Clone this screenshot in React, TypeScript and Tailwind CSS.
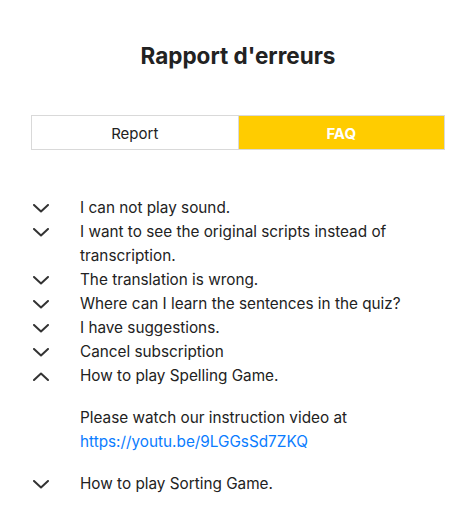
import React, { useState } from 'react';

interface FaqItem {
  question: string;
  answer?: React.ReactNode;
}

const items: FaqItem[] = [
  { question: 'I can not play sound.' },
  { question: 'I want to see the original scripts instead of transcription.' },
  { question: 'The translation is wrong.' },
  { question: 'Where can I learn the sentences in the quiz?' },
  { question: 'I have suggestions.' },
  { question: 'Cancel subscription' },
  {
    question: 'How to play Spelling Game.',
    answer: (
      <>
        Please watch our instruction video at
        <br />
        <a href="#" className="text-[#0a7cff]">
          https://youtu.be/9LGGsSd7ZKQ
        </a>
      </>
    ),
  },
  { question: 'How to play Sorting Game.' },
];

const Chevron: React.FC<{ up?: boolean }> = ({ up }) => (
  <svg width="16" height="9" viewBox="0 0 16 9" fill="none" className="shrink-0">
    <path
      d={up ? 'M1 8L8 1.5L15 8' : 'M1 1L8 7.5L15 1'}
      stroke="#333"
      strokeWidth="2"
      strokeLinecap="round"
      strokeLinejoin="round"
    />
  </svg>
);

const App: React.FC = () => {
  const [tab, setTab] = useState<'report' | 'faq'>('faq');
  const [open, setOpen] = useState<number>(6);

  return (
    <div className="min-h-screen bg-white font-['Inter',sans-serif] text-[#222]">
      <div className="ml-[31px] w-[414px]">
        <h1 className="pt-[42px] text-center text-[22.5px] font-bold leading-7 text-[#222]">
          Rapport d'erreurs
        </h1>

        <div className="mt-[45px] flex h-[35px] border border-[#d9d9d9]">
          <button
            onClick={() => setTab('report')}
            className={`flex-1 pt-[3px] text-[15px] ${
              tab === 'report' ? 'bg-[#ffcc00] font-bold text-white' : 'bg-white text-[#222]'
            }`}
          >
            Report
          </button>
          <button
            onClick={() => setTab('faq')}
            className={`flex-1 border-l border-[#d9d9d9] pt-[3px] text-[15px] ${
              tab === 'faq' ? 'bg-[#ffcc00] font-bold text-white' : 'bg-white text-[#222]'
            }`}
          >
            FAQ
          </button>
        </div>

        <ul className="mt-[46px] pl-[2px] text-[15.3px] leading-6">
          {items.map((item, i) => (
            <li key={item.question}>
              <button
                onClick={() => setOpen(open === i ? -1 : i)}
                className="flex w-full items-start text-left"
              >
                <span className="flex h-6 w-[47px] shrink-0 items-center">
                  <Chevron up={open === i} />
                </span>
                <span>{item.question}</span>
              </button>
              {open === i && item.answer && (
                <div className="pb-[18px] pl-[47px] pt-[18px]">{item.answer}</div>
              )}
            </li>
          ))}
        </ul>
      </div>
    </div>
  );
};

export default App;
